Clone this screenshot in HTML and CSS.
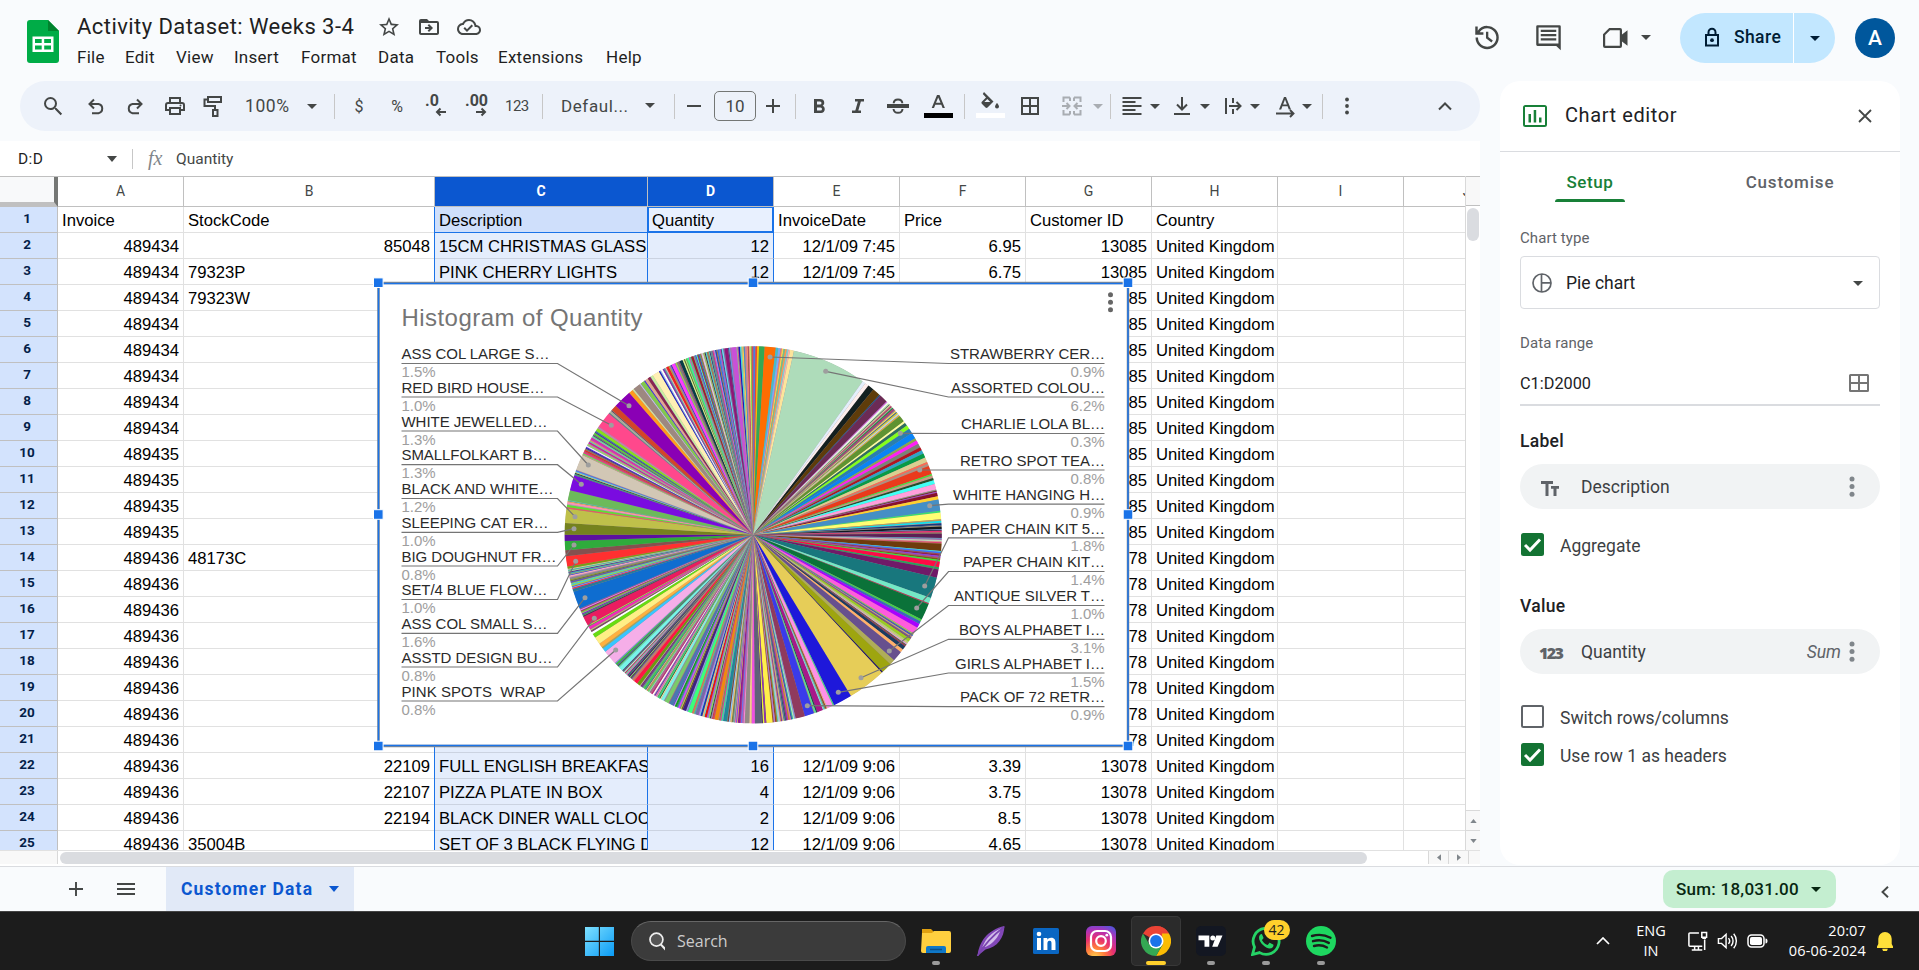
FILE: index.html
```html
<!DOCTYPE html>
<html lang="en">
<head>
<meta charset="utf-8">
<title>Activity Dataset: Weeks 3-4</title>
<link rel="stylesheet" href="styles.css">
</head>
<body>
<div class="app">
  <header class="topbar">
    <svg class="logo" viewBox="0 0 32 43"><path d="M3 0h18l11 11v29a3 3 0 0 1-3 3H3a3 3 0 0 1-3-3V3a3 3 0 0 1 3-3z" fill="#00ac47"/><path d="M21 0l11 11H21z" fill="#00832d"/><path d="M5.500 16.500h21V32h-21zM8 19v4h6.700v-4zm9.200 0v4H24v-4zM8 25.500v4h6.700v-4zm9.200 0v4H24v-4z" fill="#fff" fill-rule="evenodd"/></svg>
    <div class="heading">
      <div class="title-row">
        <span class="doc-title">Activity Dataset: Weeks 3-4</span>
        <svg class="ic20" viewBox="0 0 24 24"><path d="M22 9.240l-7.190-.62L12 2 9.190 8.630 2 9.240l5.460 4.730L5.820 21 12 17.270 18.180 21l-1.630-7.030L22 9.240zM12 15.400l-3.760 2.270 1-4.280-3.320-2.880 4.380-.38L12 6.100l1.710 4.040 4.380.38-3.320 2.880 1 4.280L12 15.400z"/></svg>
        <svg class="ic20" viewBox="0 0 24 24"><path d="M20 6h-8l-2-2H4a2 2 0 0 0-2 2v12c0 1.100.9 2 2 2h16c1.100 0 2-.9 2-2V8a2 2 0 0 0-2-2zm0 12H4V8h16v10zm-8-1l4-4-4-4-1.400 1.400L12.200 12H8v2h4.200l-1.600 1.600z"/><path d="M3 5h7l2 3H3z"/></svg>
        <svg class="ic20 cloud" viewBox="0 0 24 24"><path d="M19.350 10.040A7.490 7.490 0 0 0 12 4C9.110 4 6.600 5.640 5.350 8.040A5.994 5.994 0 0 0 0 14c0 3.310 2.690 6 6 6h13c2.760 0 5-2.240 5-5 0-2.640-2.050-4.780-4.650-4.960zM19 18H6c-2.210 0-4-1.790-4-4 0-2.050 1.530-3.760 3.560-3.970l1.070-.11.5-.95A5.469 5.469 0 0 1 12 6c2.620 0 4.880 1.860 5.390 4.430l.3 1.500 1.530.11A2.980 2.980 0 0 1 22 15c0 1.650-1.350 3-3 3zm-9-3.820l-2.090-2.090L6.500 13.500 10 17l6.010-6.010-1.410-1.410z"/></svg>
      </div>
      <nav class="menus"><span>File</span><span>Edit</span><span>View</span><span>Insert</span><span>Format</span><span>Data</span><span>Tools</span><span>Extensions</span><span>Help</span></nav>
    </div>
    <div class="actions">
      <svg class="ic30" viewBox="0 0 24 24"><path d="M12.500 3a9 9 0 0 0-7.300 3.700V3.500H3.300v6.300h6.300V7.900H6.700A7.100 7.100 0 1 1 5.400 12H3.500a9 9 0 1 0 9-9zm-.9 4.500v5l4.200 3.300 1.100-1.400-3.500-2.700V7.500z"/></svg>
      <svg class="ic30" viewBox="0 0 24 24"><path d="M21.500 3.500a1 1 0 0 0-1-1h-17a1 1 0 0 0-1 1v14a1 1 0 0 0 1 1H18l3.500 3.300zM4.300 4.300h15.400v12.400H4.300zM6 6h12v1.800H6zm0 3.300h12v1.800H6zm0 3.300h12v1.800H6z" fill-rule="evenodd"/></svg>
      <svg class="meet" viewBox="0 0 26 22"><path d="M7.200 1H18a2 2 0 0 1 2 2v4.500l5.500-4.300v15.600L20 14.500V19a2 2 0 0 1-2 2H3a2 2 0 0 1-2-2V7.200zM8 3.200L3.200 8v10.800h14.600V3.200z" fill-rule="evenodd"/></svg>
      <svg class="caret" viewBox="0 0 10 5"><path d="M0 0h10L5 5z"/></svg>
      <div class="share"><div class="share-main"><svg viewBox="0 0 16 20"><path d="M2 8h12v10.500H2zM4.500 8V5.300a3.500 3.500 0 0 1 7 0V8" fill="none" stroke="#001d35" stroke-width="2"/><circle cx="8" cy="13.200" r="1.900"/></svg><span>Share</span></div><div class="share-drop"><svg viewBox="0 0 10 5"><path d="M0 0h10L5 5z"/></svg></div></div>
      <div class="avatar">A</div>
    </div>
  </header>

  <div class="middle">
    <div class="left-col">
      <div class="toolbar" id="toolbar">
        <svg viewBox="0 0 24 24"><path d="M15.500 14h-.79l-.28-.27A6.471 6.471 0 0 0 16 9.500 6.500 6.500 0 1 0 9.500 16c1.610 0 3.090-.59 4.230-1.570l.27.280v.79l5.600 5.700 1.500-1.500L15.500 14zm-6 0a4.500 4.500 0 1 1 0-9 4.500 4.500 0 0 1 0 9z"/></svg>
        <svg viewBox="0 0 24 24"><path d="M6.500 10h8a4.700 4.700 0 0 1 0 9.200H8M10 5.500L5.500 10l4.500 4.500" fill="none" stroke="#444746" stroke-width="2"/></svg>
        <svg viewBox="0 0 24 24"><path d="M17.500 10h-8a4.700 4.700 0 0 0 0 9.200H16M14 5.500l4.500 4.500-4.500 4.500" fill="none" stroke="#444746" stroke-width="2"/></svg>
        <svg viewBox="0 0 24 24"><path d="M19 8h-1V3H6v5H5a3 3 0 0 0-3 3v6h4v4h12v-4h4v-6a3 3 0 0 0-3-3zM8 5h8v3H8zm8 14H8v-4h8zm2-4v-2H6v2H4v-4a1 1 0 0 1 1-1h14a1 1 0 0 1 1 1v4z" fill-rule="evenodd"/><circle cx="17.500" cy="11.500" r="1"/></svg>
        <svg viewBox="0 0 24 24"><path d="M7 3h13v5H7zM7 5.500H3.500V12H14v4M12 16h4.500v6H12z" fill="none" stroke="#444746" stroke-width="2"/></svg>
        <span class="zoom">100%</span>
        <svg class="car" viewBox="0 0 12 24"><path d="M1 10h10l-5 5z"/></svg>
        <i></i>
        <span class="sym">$</span><span class="sym">%</span>
        <svg viewBox="0 0 24 24"><text x="0" y="12" class="dec">.0</text><path d="M21 18h-9m3.500-3.500L12 18l3.500 3.500" fill="none" stroke="#444746" stroke-width="2"/></svg>
        <svg viewBox="0 0 24 24"><text x="0" y="12" class="dec">.00</text><path d="M11 18h9m-3.500-3.500L20 18l-3.500 3.500" fill="none" stroke="#444746" stroke-width="2"/></svg>
        <span class="n123">123</span>
        <i></i>
        <span class="fname">Defaul...</span>
        <svg class="car" viewBox="0 0 12 24"><path d="M1 9h10l-5 5z"/></svg>
        <i></i>
        <svg viewBox="0 0 24 24"><path d="M5 11h14v2H5z"/></svg>
        <span class="size">10</span>
        <svg viewBox="0 0 24 24"><path d="M5 11h6V5h2v6h6v2h-6v6h-2v-6H5z"/></svg>
        <i></i>
        <svg viewBox="0 0 24 24"><path d="M15.600 11.790c.97-.67 1.650-1.770 1.650-2.790A4 4 0 0 0 13.250 5H7v14h7.040c2.090 0 3.710-1.700 3.710-3.790 0-1.520-.86-2.820-2.150-3.420zM10 7.500h3a1.500 1.500 0 0 1 0 3h-3zm3.500 9H10v-3h3.500a1.500 1.500 0 0 1 0 3z"/></svg>
        <svg viewBox="0 0 24 24"><path d="M9 5v2.500h2.900L9.300 16.500H6V19h9v-2.500h-2.700l2.600-9H18V5z"/></svg>
        <svg viewBox="0 0 24 24"><path d="M2 11h20v2H2zM16.300 9.300C16.200 6.800 14.500 5.500 12 5.500S7.800 6.800 7.700 9.300M7.500 15c.3 2.400 1.900 3.800 4.500 3.800s4.300-1.300 4.500-3.800" fill="none" stroke="#444746" stroke-width="2"/></svg>
        <svg class="tall" viewBox="0 0 28 30"><path d="M13 4h2.500l5.400 13h-2.300l-1.300-3.300h-6L10 17H7.700zm1.200 2.500l-2.200 5.300h4.500z" fill-rule="evenodd"/><path d="M0 22h29v5H0z" fill="#000"/></svg>
        <i></i>
        <svg class="tall" viewBox="0 0 28 30"><path d="M6 1l9.500 9.500-6 6a1.500 1.500 0 0 1-2 0L3.800 12.800a1.500 1.500 0 0 1 0-2L8 6.500 4.800 3zM9.300 8l-3 3h6z" fill-rule="evenodd" transform="translate(1 0)"/><path d="M20 12s2 2.200 2 3.600a2 2 0 0 1-4 0c0-1.400 2-3.600 2-3.600z"/><path d="M-1 22h29v5H-1z" fill="#fff"/></svg>
        <svg viewBox="0 0 24 24"><path d="M3 3h18v18H3zm2 2v6h6V5zm8 0v6h6V5zm-8 8v6h6v-6zm8 0v6h6v-6z" fill-rule="evenodd"/></svg>
        <svg class="dim" viewBox="0 0 24 24"><path d="M10 3.500H3.500V8M14 3.500h6.500V8M3.500 16v4.500H10M20.500 16v4.500H14M10 3.500V7m0 10v3.500M14 3.500V7m0 10v3.500M2 12h7M6.500 9l3 3-3 3M22 12h-7m2.500-3l-3 3 3 3" fill="none" stroke="#444746" stroke-width="2"/></svg>
        <svg class="car dim" viewBox="0 0 12 24"><path d="M1 10h10l-5 5z"/></svg>
        <i></i>
        <svg viewBox="0 0 24 24"><path d="M2.500 3h19v2h-19zm0 4h13v2h-13zm0 4h19v2h-19zm0 4h13v2h-13zm0 4h19v2h-19z"/></svg>
        <svg class="car" viewBox="0 0 12 24"><path d="M1 10h10l-5 5z"/></svg>
        <svg viewBox="0 0 24 24"><path d="M12 3v12M7 10.500l5 5 5-5M4 20h16" fill="none" stroke="#444746" stroke-width="2"/></svg>
        <svg class="car" viewBox="0 0 12 24"><path d="M1 10h10l-5 5z"/></svg>
        <svg viewBox="0 0 24 24"><path d="M5 4v16M12 4v5m0 6v5M8 12h11M15.500 8l4 4-4 4" fill="none" stroke="#444746" stroke-width="2"/></svg>
        <svg class="car" viewBox="0 0 12 24"><path d="M1 10h10l-5 5z"/></svg>
        <svg viewBox="0 0 24 24"><path d="M11 3h2l5 12.500h-2.200l-1.200-3.200H9.400l-1.200 3.200H6zm1 2.500l-1.900 5h3.800z" fill-rule="evenodd"/><path d="M3 19.500h17M17 16l3.500 3.500L17 23" fill="none" stroke="#444746" stroke-width="1.900"/></svg>
        <svg class="car" viewBox="0 0 12 24"><path d="M1 10h10l-5 5z"/></svg>
        <i></i>
        <svg viewBox="0 0 24 24"><circle cx="12" cy="5.500" r="1.900"/><circle cx="12" cy="12" r="1.900"/><circle cx="12" cy="18.500" r="1.900"/></svg>
        <svg viewBox="0 0 24 24"><path d="M6 15.500l6-6 6 6" fill="none" stroke="#444746" stroke-width="2"/></svg>
      </div>

      <div class="fbar"><span class="nbox">D:D</span><svg class="fcar" viewBox="0 0 10 6"><path d="M0 0h10L5 6z"/></svg><i></i><em>fx</em><span class="fval">Quantity</span></div>

      <div class="sheet">
        <div class="grid-area">
          <div class="grid" id="grid"></div>
          <div class="vscroll"><div class="vhead"></div><div class="vthumb"></div><div class="varrows"><div><svg viewBox="0 0 8 5"><path d="M4 0l4 5H0z"/></svg></div><div><svg viewBox="0 0 8 5"><path d="M0 0h8L4 5z"/></svg></div></div></div>
        </div>
        <div class="hscroll"><div class="hcorner"></div><div class="htrack"><div class="hthumb"></div></div><div class="harrow"><svg viewBox="0 0 5 8"><path d="M5 0v8L0 4z"/></svg></div><div class="harrow"><svg viewBox="0 0 5 8"><path d="M0 0l5 4-5 4z"/></svg></div><div class="hend"></div></div>
        <svg class="chart" id="chart" viewBox="368 272 770 484"></svg>
      </div>
    </div>

    <aside class="panel">
      <div class="phead"><svg class="picon" viewBox="0 0 24 22"><path d="M2.500 0h19A2.500 2.500 0 0 1 24 2.500v17a2.500 2.500 0 0 1-2.500 2.500h-19A2.500 2.500 0 0 1 0 19.500v-17A2.500 2.500 0 0 1 2.500 0zM2 2v18h20V2zM5.500 9H8v8.500H5.500zM10.700 5h2.500v12.500h-2.500zM16 12.500h2.500v5H16z" fill="#188038" fill-rule="evenodd"/></svg><h2>Chart editor</h2><svg class="close" viewBox="0 0 14 14"><path d="M1 1l12 12M13 1L1 13" stroke="#444746" stroke-width="1.800"/></svg></div>
      <div class="tabs"><div class="tab on"><span>Setup</span></div><div class="tab"><span>Customise</span></div></div>
      <div class="pbody">
        <div class="lbl">Chart type</div>
        <div class="select"><svg class="pie-ic" viewBox="0 0 20 20"><path d="M10 1a9 9 0 1 0 0 18 9 9 0 0 0 0-18zM9.500 1v18M10 9.800h9" fill="none" stroke="#5f6368" stroke-width="1.700"/></svg><span>Pie chart</span><svg class="scar" viewBox="0 0 10 5"><path d="M0 0h10L5 5z"/></svg></div>
        <div class="lbl range-lbl">Data range</div>
        <div class="range"><span>C1:D2000</span><svg viewBox="0 0 20 18"><path d="M1.500 0h17A1.500 1.500 0 0 1 20 1.500v15a1.500 1.500 0 0 1-1.500 1.500h-17A1.500 1.500 0 0 1 0 16.500v-15A1.500 1.500 0 0 1 1.500 0zM2 2v6h7V2zm9 0v6h7V2zm-9 8v6h7v-6zm9 0v6h7v-6z" fill="#757575" fill-rule="evenodd"/></svg></div>
        <div class="sec">Label</div>
        <div class="pill"><svg class="tt" viewBox="0 0 18 15"><path d="M0 0h12v3H7.500v12h-3V3H0zM10 5h8v2.700h-2.500V15h-3V7.700H10z" fill="#5f6368"/></svg><span>Description</span><svg class="dots" viewBox="0 0 6 22"><circle cx="3" cy="3" r="2.500"/><circle cx="3" cy="10.600" r="2.500"/><circle cx="3" cy="18.200" r="2.500"/></svg></div>
        <div class="check agg"><svg viewBox="0 0 23 23"><rect width="23" height="23" rx="2.500" fill="#137333"/><path d="M4 12l5 5L19 6.500" fill="none" stroke="#fff" stroke-width="3"/></svg><span>Aggregate</span></div>
        <div class="sec val">Value</div>
        <div class="pill"><b class="num">123</b><span>Quantity</span><em>Sum</em><svg class="dots" viewBox="0 0 6 22"><circle cx="3" cy="3" r="2.500"/><circle cx="3" cy="10.600" r="2.500"/><circle cx="3" cy="18.200" r="2.500"/></svg></div>
        <div class="check sw"><svg viewBox="0 0 23 23"><rect x="1" y="1" width="21" height="21" rx="1.500" fill="none" stroke="#5f6368" stroke-width="2"/></svg><span>Switch rows/columns</span></div>
        <div class="check"><svg viewBox="0 0 23 23"><rect width="23" height="23" rx="2.500" fill="#137333"/><path d="M4 12l5 5L19 6.500" fill="none" stroke="#fff" stroke-width="3"/></svg><span>Use row 1 as headers</span></div>
      </div>
    </aside>
  </div>

  <footer class="sheetbar">
    <svg class="plus" viewBox="0 0 14 14"><path d="M7 0v14M0 7h14" stroke="#444746" stroke-width="1.900"/></svg>
    <svg class="burger" viewBox="0 0 18 12"><path d="M0 1h18M0 6h18M0 11h18" stroke="#444746" stroke-width="1.900"/></svg>
    <div class="stab"><span>Customer Data</span><svg viewBox="0 0 10 6"><path d="M0 0h10L5 6z" fill="#0b57d0"/></svg></div>
    <div class="sum"><span>Sum: 18,031.00</span><svg viewBox="0 0 10 5"><path d="M0 0h10L5 5z" fill="#072711"/></svg></div>
    <svg class="expand" viewBox="0 0 8 12"><path d="M7 .8L1.500 6 7 11.200" fill="none" stroke="#444746" stroke-width="1.900"/></svg>
  </footer>

  <div class="taskbar">
    <svg class="win" viewBox="0 0 30 30"><defs><linearGradient id="wg" x1="0" y1="0" x2="1" y2="1" ><stop offset="0" stop-color="#7ee0ff"/><stop offset="1" stop-color="#0a9bf5"/></linearGradient></defs><path d="M0 0h14.300v14.300H0zM15.500 0H30v14.300H15.500zM0 15.500h14.300V30H0zM15.500 15.500H30V30H15.500z" fill="url(#wg)"/></svg>
    <div class="tsearch"><svg viewBox="0 0 20 20"><circle cx="11" cy="8" r="6.800" fill="#555" stroke="#eee" stroke-width="1.800"/><path d="M6.500 13L1 18.800" stroke="#eee" stroke-width="2.200" transform="translate(22 0) scale(-1 1)"/></svg><span>Search</span></div>
    <div class="app-ic folder"><svg viewBox="0 0 30 30"><path d="M1 3h9l3 3v5H1z" fill="#e0a010"/><path d="M1 7h10l2-2h15a2 2 0 0 1 2 2v18a2 2 0 0 1-2 2H2a2 2 0 0 1-2-2z" fill="#ffcf3f"/><path d="M5 27v-5a2 2 0 0 1 2-2h16a2 2 0 0 1 2 2v5z" fill="#0f78c8"/><path d="M9 23.500h12" stroke="#084f8a" stroke-width="1.500"/></svg><u></u></div>
    <div class="app-ic"><svg viewBox="0 0 30 30"><path d="M1.500 30C3 16 11 4 28.500 0c-.5 12-7 21-19 23.500z" fill="#8247b8"/><path d="M6.500 21C9.500 12.500 16 6 25 2.500c-2.500 9-8 15-15.500 18.500z" fill="#d3bdea"/><path d="M1.500 30C8 19 16 10 28 1" fill="none" stroke="#7a45b0" stroke-width="1.600"/></svg></div>
    <div class="app-ic"><svg viewBox="0 0 30 30"><rect x="2" y="2" width="26" height="26" rx="1.500" fill="#0a66c2"/><path d="M6 12h4v12H6zM12.500 12h3.800v1.700c.7-1.200 2-2 3.800-2 3.700 0 4.400 2.400 4.400 5.600V24h-4v-6c0-1.500 0-3.200-1.900-3.200s-2.200 1.500-2.200 3.100V24h-3.900z" fill="#fff"/><circle cx="8" cy="8" r="2.300" fill="#fff"/></svg></div>
    <div class="app-ic"><svg viewBox="0 0 30 30"><defs><radialGradient id="ig" cx=".3" cy="1.050" r="1.150"><stop offset="0" stop-color="#ffd34e"/><stop offset=".3" stop-color="#ff7a3d"/><stop offset=".55" stop-color="#e8306f"/><stop offset=".8" stop-color="#b032b8"/><stop offset="1" stop-color="#5b51d8"/></radialGradient></defs><rect width="30" height="30" rx="6" fill="url(#ig)"/><rect x="5" y="5" width="20" height="20" rx="6" fill="none" stroke="#fff" stroke-width="2.200"/><circle cx="15" cy="15" r="4.800" fill="none" stroke="#fff" stroke-width="2.200"/><circle cx="20.800" cy="9.200" r="1.400" fill="#fff"/></svg></div>
    <div class="app-ic active"><svg viewBox="0 0 30 30"><path d="M15 15L2 7.500A15 15 0 0 1 28 7.500z" fill="#ea4335"/><path d="M15 0a15 15 0 0 1 13 7.500H15z" fill="#ea4335"/><path d="M28 7.500A15 15 0 0 1 15 30l6.500-11.250L21 7.500z" fill="#fbbc04"/><path d="M2 7.500A15 15 0 0 0 15 30l6.500-11.250H8.500z" fill="#34a853"/><circle cx="15" cy="15" r="7.500" fill="#fff"/><circle cx="15" cy="15" r="5.900" fill="#1a73e8"/></svg><u></u></div>
    <div class="app-ic"><svg viewBox="0 0 30 30"><rect width="30" height="30" rx="5" fill="#131722"/><path d="M2.500 9.500h10.800v11.300H8.500v-6.500h-6zM20.300 9.500h6.200l-4.900 11.300h-5.400z" fill="#fff"/><circle cx="16.800" cy="11.900" r="2.500" fill="#fff"/></svg><u></u></div>
    <div class="app-ic"><svg viewBox="0 0 30 30"><path d="M1.500 28.500l2-7.300A13 13 0 1 1 8.600 26.600z" fill="none" stroke="#25d366" stroke-width="2.800"/><path d="M10.500 8c-.8 0-2.500 1.200-2.500 3.700 0 4.500 6.500 10.800 10.800 10.800 2 0 3.700-1.500 3.700-3.200 0-.5 0-.7-.4-.9l-3-1.500c-.4-.2-.7-.1-1 .3l-1.200 1.500c-.3.3-.6.3-1 .1-2.200-1-3.600-2.300-4.700-4.300-.2-.4-.1-.6.2-.9l.9-1.100c.2-.3.2-.6.1-.9l-1.300-3c-.2-.5-.4-.6-.6-.6z" fill="#25d366"/></svg><strong>42</strong><u></u></div>
    <div class="app-ic"><svg viewBox="0 0 30 30"><circle cx="15" cy="15" r="15" fill="#1ed760"/><path d="M6 10c6-1.800 13-1.200 18.500 1.800M7 15.200c5-1.500 11-1 15.800 1.700M8 20c4.500-1.200 9-.8 13 1.500" fill="none" stroke="#1c1c1c" stroke-width="2.400" stroke-linecap="round"/></svg><u></u></div>
    <div class="tray">
      <svg class="up" viewBox="0 0 14 8"><path d="M1 7l6-6 6 6" fill="none" stroke="#fff" stroke-width="1.700"/></svg>
      <div class="lang">ENG<br>IN</div>
      <svg class="mon" viewBox="0 0 22 22"><path d="M12.500 2H3a1 1 0 0 0-1 1v12a1 1 0 0 0 1 1h13M8 16v3.500M12 16v3.500M5 20h11M18.500 9v11M15.500 1.500h5v5h-5zM16 7.500h4" fill="none" stroke="#fff" stroke-width="1.600"/></svg>
      <svg class="spk" viewBox="0 0 22 18"><path d="M1.500 6.500h3.300L9.500 2v14l-4.700-4.500H1.500zM12 6a4.500 4.500 0 0 1 0 6M14.800 3.700a8 8 0 0 1 0 10.600M17.500 1.500a11.500 11.500 0 0 1 0 15" fill="none" stroke="#fff" stroke-width="1.500"/></svg>
      <svg class="bat" viewBox="0 0 21 14"><rect x="1" y="1" width="16" height="12" rx="3.500" fill="none" stroke="#fff" stroke-width="1.500"/><rect x="3" y="3" width="12" height="8" rx="1.800" fill="#fff"/><path d="M18.500 4.500c1.500 0 2 1 2 2.500s-.5 2.500-2 2.500z" fill="#fff"/></svg>
      <div class="clock">20:07<br>06-06-2024</div>
      <svg class="bell" viewBox="0 0 16 19"><path d="M8 0a6.700 6.700 0 0 1 6.700 6.700V12l1.300 2.500V16H0v-1.500L1.300 12V6.700A6.700 6.700 0 0 1 8 0zM5.300 16.800h5.400a2.700 2.700 0 0 1-5.400 0z" fill="#ffe03a"/></svg>
    </div>
  </div>
</div>
<script src="script.js"></script>
</body>
</html>
```

FILE: styles.css
```css
* { box-sizing: border-box; }
body { margin: 0; overflow: hidden; font-family: Roboto, "Open Sans", sans-serif; color: #1f1f1f; }
i, em { font-style: normal; }
.app { width: 1919px; height: 970px; display: grid; grid-template-rows: 81px 785px 46px 58px; background: #f9fbfd; overflow: hidden; }

/* top bar */
.topbar { display: flex; }
.logo { width: 32px; height: 43px; margin: 20px 0 0 27px; flex: none; }
.heading { margin-left: 18px; padding-top: 12px; width: 1380px; flex: none; }
.title-row { display: flex; align-items: center; height: 30px; }
.doc-title { font-size: 22px; width: 300px; white-space: nowrap; letter-spacing: .44px; margin-top: -1px; }
.ic20 { width: 24px; height: 24px; fill: #444746; margin-right: 16px; }
.cloud { margin-left: 0; }
.menus { display: grid; grid-template-columns: 48px 51px 58px 67px 77px 58px 62px 108px 60px; font-size: 17px; line-height: 30px; letter-spacing: .25px; }
.actions { display: flex; align-items: flex-start; margin-left: 14px; }
.ic30 { width: 31px; height: 31px; fill: #444746; margin: 22px 31px 0 0; }
.meet { width: 26px; height: 22px; fill: #444746; margin: 27px 0 0 7px; }
.caret { width: 10px; height: 5px; fill: #444746; margin: 35px 0 0 13px; }
.share { display: flex; width: 155px; height: 50px; margin: 13px 0 0 29px; border-radius: 25px; background: #c2e7ff; overflow: hidden; flex: none; }
.share-main { width: 114px; border-right: 1px solid #fff; display: flex; align-items: center; padding-left: 24px; font-size: 17.500px; font-weight: 500; color: #001d35; letter-spacing: .4px; }
.share-main svg { width: 16px; height: 20px; margin: -3px 14px 0 0; fill: #001d35; }
.share-main span { margin-top: -3px; }
.share-drop { flex: 1; display: grid; place-items: center; }
.share-drop svg { width: 10px; height: 5px; fill: #001d35; }
.avatar { width: 40px; height: 40px; margin: 18px 0 0 20px; border-radius: 50%; background: #00579c; color: #fff; font-size: 21px; font-weight: 500; display: grid; place-items: center; flex: none; }

.middle { display: flex; gap: 20px; min-height: 0; }
.left-col { width: 1480px; display: flex; flex-direction: column; flex: none; }

/* toolbar */
.toolbar { margin-left: 20px; height: 50px; flex: none; border-radius: 25px; background: #edf2fa; padding-left: 21px; display: grid; align-items: center; color: #444746;
  grid-template-columns: 43px 39px 40px 38px 44px 61px 28px 18px 38px 35px 40px 40px 37px 19px 83px 30px 8px 32px 47px 34px 12px 39px 40px 38px 40px 13px 41px 42px 32px 18px 10px 29px 21px 29px 22px 28px 24px 28px 21px 13px 98px 24px; }
.toolbar svg { width: 24px; height: 24px; fill: #444746; overflow: visible; }
.toolbar .car { width: 12px; }
.toolbar .tall { width: 28px; height: 30px; }
.toolbar i { width: 1px; height: 25px; background: #c7c7c7; }
.toolbar .dim { opacity: .4; }
.toolbar span { white-space: nowrap; }
.zoom { font-size: 17.500px; letter-spacing: .6px; }
.sym { font-size: 16px; text-align: center; width: 14px; }
.n123 { font-size: 15px; width: 24px; letter-spacing: -.5px; }
.dec { font: 700 16px Roboto, sans-serif; }
.fname { font-size: 17px; letter-spacing: .6px; }
.size { width: 42px; height: 30px; border: 1px solid #747775; border-radius: 5px; text-align: center; line-height: 28px; font-size: 17px; }

/* formula bar */
.fbar { margin-top: 10px; height: 35px; background: #fff; display: flex; align-items: center; font-size: 15.500px; flex: none; }
.nbox { width: 89px; padding-left: 18px; color: #1f1f1f; letter-spacing: .4px; }
.fcar { width: 10px; height: 6px; margin-left: 18px; fill: #444746; }
.fbar i { width: 1px; height: 20px; background: #c7c7c7; margin: 0 15px 0 15px; }
.fbar em { font: italic 20px "Liberation Serif", serif; color: #80868b; width: 28px; }
.fval { color: #444746; }

/* sheet */
.sheet { position: relative; flex: 1; display: flex; flex-direction: column; min-height: 0; background: #fff; }
.grid-area { display: flex; height: 675px; overflow: hidden; border-bottom: 1px solid #e1e1e1; }
.grid { width: 1465px; flex: none; overflow: hidden; border-top: 1px solid #c0c0c0; }
.row { display: grid; grid-template-columns: 58px 126px 251px 213px repeat(7, 126px); height: 26px; width: 1530px; }
.row.head { height: 30px; }
.row > div { border-right: 1px solid #e1e1e1; border-bottom: 1px solid #e1e1e1; overflow: hidden; white-space: pre; font: 16.670px/25px "Liberation Sans", Arial, sans-serif; color: #000; padding: 1px 4px 0 4px; }
.row > div.r { text-align: right; }
.row > .rh { background: #d3e3fd; font: 700 13.500px/22px Roboto, sans-serif; text-align: center; color: #041e49; border-color: #c0c0c0; padding: 0 3px 0 0; }
.row.head > div { text-align: center; font: 14px/29px Roboto, sans-serif; color: #444746; padding: 0; border-color: #c0c0c0; }
.row.head > .sel { background: #0b57d0; color: #fff; font-weight: 700; }
.row.head > .corner { background: #f8f9fa; border-right: 4px solid #757775; border-bottom: 5px solid #c0c0c0; }
.row > .c { background: #e4edfc; box-shadow: -1px 0 #1a73e8; border-right-color: #1a73e8; border-bottom-color: #cbd3e1; }
.row > .d { background: #e4edfc; border-right-color: #1a73e8; border-bottom-color: #cbd3e1; }
.row.first > .c { background: #cfdffb; border-bottom-color: #1a73e8; }
.row.first > .d { background: #e8f0fe; box-shadow: inset 0 0 0 1px #1a73e8; border-bottom-color: #1a73e8; }
.vscroll { flex: 1; display: flex; flex-direction: column; align-items: center; border-left: 1px solid #d9d9d9; }
.vhead { align-self: stretch; height: 30px; background: #f8f8f8; border-top: 1px solid #c0c0c0; border-bottom: 1px solid #c0c0c0; }
.vthumb { width: 12px; height: 33px; margin-top: 2px; border-radius: 6px; background: #dadce0; }
.varrows { margin-top: auto; align-self: stretch; }
.varrows div { height: 20px; display: grid; place-items: center; background: #f8f8f8; border-top: 1px solid #d9d9d9; }
.varrows svg { width: 7px; height: 4px; fill: #80868b; }
.hscroll { display: flex; height: 13px; }
.hcorner { width: 58px; background: #f8f8f8; border-right: 1px solid #d9d9d9; }
.htrack { width: 1370px; padding: 1px 0 0 2px; }
.hthumb { width: 1307px; height: 12px; border-radius: 6px; background: #dadce0; }
.harrow { width: 20px; background: #f8f8f8; border-left: 1px solid #d9d9d9; display: grid; place-items: center; }
.harrow svg { width: 4px; height: 7px; fill: #80868b; }
.hend { flex: 1; background: #f8f8f8; border-left: 1px solid #d9d9d9; }

/* chart floats over the cells */
.chart { position: absolute; left: 368px; top: 96px; width: 770px; height: 484px; font-family: "Liberation Sans", Arial, sans-serif; }
.chart .title { font-size: 24px; fill: #757575; }
.chart .name { font-size: 15px; fill: #2a2a2a; }
.chart .pct { font-size: 15px; fill: #9e9e9e; }
.chart .lead { fill: none; stroke: #757575; stroke-width: 1.200; }

/* side panel */
.panel { width: 400px; height: 784px; background: #fff; border-radius: 20px; }
.phead { height: 71px; border-bottom: 1px solid #dadce0; display: flex; align-items: center; padding: 0 28px 0 23px; }
.picon { width: 24px; height: 22px; }
.phead h2 { font-size: 20px; font-weight: 400; margin: -3px auto 0 18px; letter-spacing: .6px; color: #202124; }
.close { width: 14px; height: 14px; }
.tabs { display: grid; grid-template-columns: 180px 220px; height: 51px; }
.tab { text-align: center; font-size: 17px; font-weight: 500; letter-spacing: .8px; color: #5f6368; }
.tab span { display: block; line-height: 60px; height: 47px; }
.tab.on { color: #188038; letter-spacing: .6px; }
.tab.on span { width: 70px; margin: 0 auto; }
.tab.on::after { content: ""; display: block; width: 70px; height: 3px; margin: 0 auto; background: #188038; border-radius: 3px 3px 0 0; }
.pbody { padding: 25px 20px 0; color: #3c4043; }
.lbl { font-size: 15px; line-height: 20px; color: #5f6368; letter-spacing: .1px; }
.select { height: 53px; margin-top: 8px; border: 1px solid #dadce0; border-radius: 4px; display: flex; align-items: center; padding: 1px 16px 0 11px; font-size: 17.500px; color: #202124; }
.pie-ic { width: 20px; height: 20px; margin-right: 14px; }
.scar { width: 10px; height: 5px; margin-left: auto; fill: #444746; }
.range-lbl { margin-top: 24px; }
.range { height: 44px; margin-top: 9px; border-bottom: 2px solid #dadce0; display: flex; justify-content: space-between; align-items: center; padding-right: 11px; font-size: 16.300px; color: #202124; }
.range svg { width: 20px; height: 18px; }
.sec { margin-top: 23px; font-size: 17.500px; line-height: 24px; font-weight: 500; color: #202124; letter-spacing: .3px; }
.pill { height: 45px; margin-top: 11px; border-radius: 23px; background: #f1f3f4; display: flex; align-items: center; font-size: 17.500px; color: #3c4043; padding: 0 25px 0 19px; }
.tt { width: 18px; height: 15px; margin: 3px 22px 0 2px; }
.pill span { flex: 1; }
.num { width: 42px; font: 800 16px "Open Sans", sans-serif; letter-spacing: -1.600px; color: #5f6368; padding-top: 2px; }
.pill em { font-style: italic; color: #5f6368; margin-right: 8px; }
.dots { width: 6px; height: 22px; fill: #80868b; }
.check { display: flex; align-items: center; gap: 16px; height: 23px; margin-top: 15px; padding-left: 1px; font-size: 17.500px; color: #3c4043; }
.check span { padding-top: 2px; }
.check svg { width: 23px; height: 23px; flex: none; }
.agg { margin-top: 24px; }
.sec.val { margin-top: 38px; }
.sw { margin-top: 31px; }

/* sheet tabs */
.sheetbar { border-top: 1px solid #dadce0; display: flex; align-items: center; border-bottom: 1px solid #444; }
.plus { width: 14px; height: 14px; margin-left: 69px; }
.burger { width: 18px; height: 12px; margin-left: 34px; }
.stab { margin-left: 31px; width: 188px; height: 44px; background: #e1e9f7; display: flex; align-items: center; padding: 0 15px; justify-content: space-between; color: #0b57d0; font-weight: 700; font-size: 17.500px; letter-spacing: 1.150px; flex: none; white-space: nowrap; }
.stab svg { width: 10px; height: 6px; }
.sum { margin-left: 1309px; width: 173px; height: 38px; border-radius: 10px; background: #c4eed0; display: flex; align-items: center; justify-content: space-between; padding: 0 15px 0 13px; font-size: 17px; font-weight: 500; letter-spacing: .25px; color: #072711; flex: none; white-space: nowrap; }
.sum svg { width: 10px; height: 5px; }
.expand { width: 8px; height: 12px; margin: 6px 0 0 45px; }

/* task bar */
.taskbar { background: #1c1c1c; display: flex; align-items: center; padding-left: 585px; color: #fff; font-family: "Open Sans", "Noto Sans", sans-serif; }
.win { width: 29px; height: 29px; flex: none; }
.tsearch { margin: 0 2px 0 17px; width: 275px; height: 40px; border-radius: 20px; background: #3b3b3b; border: 1px solid #4a4a4a; border-top-color: #666; display: flex; align-items: center; padding-left: 14px; flex: none; font-size: 16px; color: #ccc; }
.tsearch svg { width: 19px; height: 19px; margin-right: 12px; }
.app-ic { position: relative; width: 50px; height: 50px; margin: 0 2.500px; flex: none; display: grid; place-items: center; border-radius: 5px; }
.app-ic svg { width: 30px; height: 30px; }
.app-ic u { position: absolute; left: 21px; bottom: 1px; width: 8px; height: 4px; border-radius: 2px; background: #9a9a9a; }
.app-ic.active { background: #2b2b2b; box-shadow: inset 0 0 0 1px #383838; }
.app-ic.active u { left: 15px; width: 20px; background: #ffd02c; }
.app-ic strong { position: absolute; left: 23px; top: 4px; width: 26px; height: 20px; border-radius: 10px; background: #ffd02c; color: #1c1c1c; font: 14px/20px "Open Sans", sans-serif; text-align: center; }
.tray { margin-left: auto; width: 329px; display: flex; align-items: center; flex: none; font-size: 14.500px; line-height: 20px; }
.up { width: 14px; height: 8px; margin-left: 6px; }
.lang { width: 40px; margin-left: 21px; text-align: center; }
.mon { width: 21px; height: 21px; margin-left: 16px; }
.spk { width: 21px; height: 18px; margin-left: 9px; }
.bat { width: 21px; height: 14px; margin-left: 9px; }
.clock { width: 90px; margin-left: 8px; text-align: right; white-space: nowrap; letter-spacing: .15px; }
.bell { width: 16px; height: 19px; margin-left: 11px; }
```

FILE: script.js
```js
// ---- cells ----
const head = ['', 'A', 'B', 'C', 'D', 'E', 'F', 'G', 'H', 'I', 'J'];
const known = {
  1: ['Invoice', 'StockCode', 'Description', 'Quantity', 'InvoiceDate', 'Price', 'Customer ID', 'Country'],
  2: ['489434', '85048', '15CM CHRISTMAS GLASS BALL', '12', '12/1/09 7:45', '6.95', '13085', 'United Kingdom'],
  3: ['489434', '79323P', 'PINK CHERRY LIGHTS', '12', '12/1/09 7:45', '6.75', '13085', 'United Kingdom'],
  22: ['489436', '22109', 'FULL ENGLISH BREAKFAST', '16', '12/1/09 9:06', '3.39', '13078', 'United Kingdom'],
  23: ['489436', '22107', 'PIZZA PLATE IN BOX', '4', '12/1/09 9:06', '3.75', '13078', 'United Kingdom'],
  24: ['489436', '22194', 'BLACK DINER WALL CLOCK', '2', '12/1/09 9:06', '8.5', '13078', 'United Kingdom'],
  25: ['489436', '35004B', 'SET OF 3 BLACK FLYING DUCKS', '12', '12/1/09 9:06', '4.65', '13078', 'United Kingdom']
};
const codes = { 4: '79323W', 14: '48173C' };
let html = '<div class="row head">' + head.map((h, i) =>
  `<div class="${i === 0 ? 'corner' : i === 3 || i === 4 ? 'sel' : ''}">${h}</div>`).join('') + '</div>';
for (let r = 1; r <= 25; r++) {
  const inv = r < 10 ? '489434' : r < 14 ? '489435' : '489436';
  const v = known[r] || [inv, codes[r] || '', '', '', '', '', r < 14 ? '13085' : '13078', 'United Kingdom'];
  html += `<div class="row${r === 1 ? ' first' : ''}"><div class="rh">${r}</div>`;
  for (let c = 0; c < 10; c++) {
    const t = v[c] || '';
    const num = r > 1 && c !== 2 && c !== 7 && !/[A-Z]/.test(t);
    html += `<div class="${c === 2 ? 'c' : c === 3 ? 'd' : ''}${num ? ' r' : ''}">${t}</div>`;
  }
  html += '</div>';
}
document.getElementById('grid').innerHTML = html;

// ---- pie: [from, to, colour] in degrees clockwise from the top; gaps hold many hairline slices ----
const wedges = [
  [0, .7, '#4a7fe0'], [.7, 1.2, '#ea4335'], [1.2, 1.800, '#fbbc04'], [1.800, 3.500, '#34a853'], [3.500, 6.900, '#ff6d01'],
  [6.900, 7.700, '#46bdc6'], [7.700, 8.400, '#7baaf7'], [8.400, 8.800, '#f07b72'], [8.800, 9.300, '#fcd04f'], [9.300, 9.800, '#71c287'], [9.800, 10.300, '#ff994d'], [10.300, 10.800, '#7ed1d7'], [10.800, 11.300, '#f7b4ae'], [11.300, 12.500, '#fde49b'],
  [12.500, 35.500, '#aedcba'], [35.500, 36.500, '#e2effb'], [36.500, 37.700, '#fdeeec'], [37.700, 39.600, '#14201f'], [39.600, 42, '#5e3c0a'], [42, 42.400, '#1c4a80'], [42.400, 45, '#6b2b55'],
  [51, 53, '#5f9331'], [53, 53.600, '#ffffa0'], [53.600, 54.600, '#2f6f60'], [54.600, 55.800, '#84ff1c'], [55.800, 57.300, '#2a7fae'], [57.300, 59.200, '#0a84f5'], [59.200, 60, '#8aa650'], [60, 61.100, '#ff20f5'], [61.100, 62.300, '#7b8277'], [62.300, 63.400, '#b0151f'], [63.400, 64.500, '#2fa5c5'], [64.500, 65.800, '#079b46'], [65.800, 67.300, '#d9cf90'], [67.300, 67.900, '#ff6a50'], [67.900, 68.600, '#b09080'], [68.600, 71.200, '#ea3a1c'], [71.200, 71.700, '#4be03a'], [71.700, 72.500, '#c99a86'], [72.500, 73.200, '#23502a'], [73.200, 74.400, '#40fff5'], [74.400, 76.100, '#ff9fdc'], [77.100, 78.200, '#88102c'], [78.200, 79.200, '#ffd030'], [79.200, 82.700, '#458fc5'], [82.700, 83.200, '#36e070'], [83.200, 85.300, '#ffff73'],
  [85.700, 86.300, '#10e0f0'], [86.500, 87, '#183880'], [87.500, 88.300, '#101820'], [88.800, 89.300, '#e83070'], [89.700, 91, '#5d1f55'], [92.700, 94.900, '#6e3b0c'], [95.200, 95.700, '#3a70ff'], [98.200, 99.900, '#ff0a45'], [99.900, 100.600, '#2aa05a'], [100.600, 103.200, '#701a68'], [103.200, 109.600, '#18777d'], [109.600, 111.300, '#74e8c5'], [111.300, 111.600, '#c03050'], [111.600, 116.700, '#0b7239'], [116.700, 117.400, '#46d048'], [117.400, 118.200, '#3a66c0'], [118.200, 119.500, '#a800ff'], [119.500, 121.600, '#ff5bde'],
  [123.500, 124.500, '#9acd20'], [126.300, 127.500, '#1c3c60'], [127.500, 128.500, '#ffb06a'], [128.500, 131.700, '#67508e'], [131.700, 133.300, '#afad58'], [133.300, 136.600, '#9ea50f'], [136.600, 137, '#201860'], [137, 148.800, '#e6cd58'], [148.800, 154.600, '#1e18da'], [154.600, 155, '#40e080'], [155, 156.800, '#ff90e8'], [158.300, 160.100, '#a8188a'], [161.200, 164.100, '#3a3bea'], [164.100, 167, '#8f3a5e'], [174.100, 176, '#ffee4a'], [177.400, 179.500, '#5e6178'], [179.500, 180.500, '#ee50e0'], [180.500, 181.200, '#f7c890'], [181.200, 182.600, '#938a86'],
  [184, 184.700, '#901a90'], [188, 189.200, '#208898'], [190.700, 191.900, '#f08a0e'], [194.300, 195, '#e81010'], [195.700, 196.300, '#1c38b0'], [196.900, 197.900, '#7868a8'], [199, 200.300, '#3bff7a'], [200.900, 202, '#412080'], [203, 203.500, '#e040ff'], [204, 204.600, '#10a020'], [205.200, 206.500, '#4a78b0'], [206.700, 208, '#7acb6a'], [208.300, 209.300, '#80f0e8'], [211.800, 212.300, '#fffff0'], [217, 218, '#6b9a10'], [218, 219.200, '#ff1444'], [221, 221.400, '#501060'], [224, 225.300, '#76f5e8'], [227.200, 231.700, '#f5aee8'], [231.700, 232.900, '#38c5ff'], [232.900, 233.400, '#a0a860'], [233.400, 234.700, '#ffb13e'], [234.700, 237, '#ffef86'], [237, 238.300, '#68dc10'], [238.300, 239, '#fff'], [240.200, 240.800, '#ff20c0'], [241.300, 244.200, '#ea1c60'],
  [247, 252.400, '#0f6dd0'], [252.400, 253.300, '#2a7a98'], [259.600, 260.300, '#78a018'], [260.300, 263.500, '#ff3030'], [263.500, 265.300, '#85504f'], [265.300, 268.100, '#2fab3c'], [268.100, 270, '#5c10a0'], [270, 273.600, '#75821e'], [273.600, 278, '#bfc04a'], [278, 278.500, '#e06060'], [278.500, 279.200, '#60e030'], [279.400, 280, '#ff90b8'], [280.600, 283.700, '#6cba5b'], [283.700, 288.400, '#7a0ce0'], [290.200, 295, '#d2c7b5'], [303.500, 304.400, '#86e01a'], [304.400, 305, '#c080b0'], [305, 310, '#ff488c'], [311.400, 313.200, '#d44528'], [313.200, 318.900, '#8a00b5'], [318.900, 320.200, '#ff9b1f'], [320.200, 320.700, '#d0e0a0'], [320.700, 323, '#9d8880'], [323.400, 324.700, '#82c94c'], [325, 326, '#e0a890'], [326, 326.900, '#8a2550'], [327, 327.800, '#c8f0a0'], [327.800, 330, '#fff0b5'], [330, 330.400, '#2020c0'], [330.700, 331.300, '#fff'], [331.300, 331.800, '#8030b0'], [332.500, 333.300, '#f02020'], [334.400, 335.400, '#ff3aff'], [336, 336.600, '#808080'], [337, 338, '#083e45'], [339.500, 340, '#30ff90'], [340.700, 341.500, '#a02030'], [344, 344.600, '#d8ccd8'], [351.200, 352.300, '#8e1678'], [353.300, 354.900, '#c850d8'], [355.500, 356, '#1818c0'], [357.500, 358, '#d080a0']
];
let seed = 20091201;
const rnd = () => (seed = (seed * 1664525 + 1013904223) % 4294967296) / 4294967296;
const CX = 753.2, CY = 534.8, R = 188.6;
const pt = a => {
  const t = a * Math.PI / 180;
  return (CX + R * Math.sin(t)).toFixed(2) + ' ' + (CY - R * Math.cos(t)).toFixed(2);
};
const slice = (a, b, f) => `<path d="M${CX} ${CY}L${pt(a)}A${R} ${R} 0 0 1 ${pt(b)}z" fill="${f}"/>`;
let pie = `<circle cx="${CX}" cy="${CY}" r="${R - .3}" fill="#9c8c96"/>`;
const hairlines = (a, b) => {
  while (a < b - .01) {
    const e = Math.min(b, a + .2 + rnd() * .28);
    const ch = () => Math.floor(30 + rnd() * 225);
    pie += slice(a, e, `rgb(${ch()},${ch()},${ch()})`);
    a = e;
  }
};
let at = 0;
for (const [a, b, f] of wedges) {
  if (a > at) hairlines(at, a);
  pie += slice(a, b, f);
  at = b;
}
hairlines(at, 360);

// ---- callouts: name, share, text width, line y, dot x, dot y ----
const left = [
  ['ASS COL LARGE S…', '1.5%', 147, 363.5, 629, 405.700], ['RED BIRD HOUSE…', '1.0%', 142, 397, 611.3, 425.3],
  ['WHITE JEWELLED…', '1.3%', 145, 431, 588.3, 465], ['SMALLFOLKART B…', '1.3%', 145, 464.700, 581.3, 484.3],
  ['BLACK AND WHITE…', '1.2%', 151, 498.5, 575, 516.700], ['SLEEPING CAT ER…', '1.0%', 146, 532.3, 574, 528.700],
  ['BIG DOUGHNUT FR…', '0.8%', 154, 566, 574, 545], ['SET/4 BLUE FLOW…', '1.0%', 145, 599.5, 575.700, 561.3],
  ['ASS COL SMALL S…', '1.6%', 145, 633.3, 585, 597.700], ['ASSTD DESIGN BU…', '0.8%', 150, 667, 594.3, 618.3],
  ['PINK SPOTS  WRAP', '0.8%', 143, 701, 615.700, 650]
];
const right = [
  ['STRAWBERRY CER…', '0.9%', 154, 363.5, 770, 357], ['ASSORTED COLOU…', '6.2%', 153, 397, 825.700, 371.3],
  ['CHARLIE LOLA BL…', '0.3%', 143, 433.5, 900.3, 433.3], ['RETRO SPOT TEA…', '0.8%', 144, 470, 919.700, 470],
  ['WHITE HANGING H…', '0.9%', 151, 504.2, 929.700, 505.700], ['PAPER CHAIN KIT 5…', '1.8%', 153, 537.800, 924.700, 586],
  ['PAPER CHAIN KIT…', '1.4%', 141, 571.5, 916.700, 608], ['ANTIQUE SILVER T…', '1.0%', 150, 605.5, 889.3, 651],
  ['BOYS ALPHABET I…', '3.1%', 145, 639.3, 861, 677.700], ['GIRLS ALPHABET I…', '1.5%', 149, 673, 838.3, 692.3],
  ['PACK OF 72 RETR…', '0.9%', 144, 706.700, 807.3, 705.700]
];
let notes = '';
const callout = (isLeft, [n, p, w, y, dx, dy]) => {
  const x = isLeft ? 401.5 : 1104.5, k = isLeft ? 557.5 : 948.5;
  const nx = isLeft ? 401.5 : 1104 - w, px = isLeft ? 401.5 : 1070.5;
  notes += `<path class="lead" d="M${x} ${y}H${k}L${dx} ${dy}"/><circle cx="${dx}" cy="${dy}" r="2.500" fill="#9e9e9e"/>` +
    `<text class="name" xml:space="preserve" x="${nx}" y="${y - 4.3}" textLength="${w + 1}">${n}</text>` +
    `<text class="pct" x="${px}" y="${y + 13.600}" textLength="34">${p}</text>`;
};
left.forEach(c => callout(true, c));
right.forEach(c => callout(false, c));

let handles = '';
for (const x of [378.3, 753, 1128]) for (const y of [282.700, 514.5, 746]) {
  if (x === 753 && y === 514.5) continue;
  handles += `<rect x="${x - 4.800}" y="${y - 4.800}" width="9.600" height="9.600" fill="#1a73e8" stroke="#fff" stroke-width="1"/>`;
}
document.getElementById('chart').innerHTML =
  `<rect x="378.5" y="283" width="749.500" height="463" fill="#fff" stroke="#8a8a8a" stroke-width="2.500"/>` +
  `<rect x="378.5" y="283.500" width="749.500" height="462" fill="none" stroke="#1a73e8" stroke-width="1.500"/>` +
  pie + notes +
  `<text class="title" x="401.5" y="325.700" textLength="241">Histogram of Quantity</text>` +
  [294.800, 302.3, 309.800].map(y => `<circle cx="1110.500" cy="${y}" r="2.500" fill="#666"/>`).join('') + handles;
```
